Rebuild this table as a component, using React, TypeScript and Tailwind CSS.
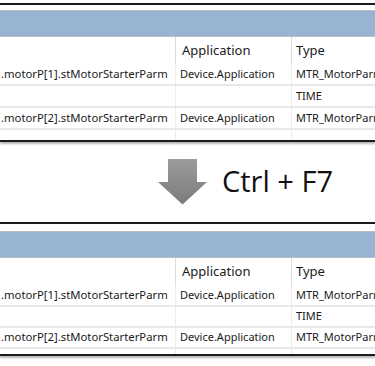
import React from "react";

const font = { fontFamily: "Tahoma, 'Noto Sans', 'DejaVu Sans', sans-serif" };

type Row = { name: string; app: string; type: string };

const rows: Row[] = [
  { name: ".motorP[1].stMotorStarterParm", app: "Device.Application", type: "MTR_MotorParm" },
  { name: "", app: "", type: "TIME" },
  { name: ".motorP[2].stMotorStarterParm", app: "Device.Application", type: "MTR_MotorParm" },
];

function Panel({ gapTop, headerH, rowH, tailH }: { gapTop: string; headerH: string; rowH: string; tailH: string }) {
  return (
    <div
      className="w-full overflow-hidden border-t-2 border-b-2 border-[#1b1b1b] bg-white shadow-[0_2px_2px_rgba(0,0,0,0.3)]"
      style={font}
    >
      <div className={gapTop} />
      <div className="h-[27px] border-y border-[#b9bfc6] bg-[#98b4d3]" />
      <div className={`flex ${headerH} text-[13px] text-[#1a1a1a]`}>
        <div className="w-[176px] shrink-0 border-r border-[#dcdcdc]" />
        <div className="flex w-[116px] shrink-0 items-center border-r border-[#dcdcdc] pl-[6px]">Application</div>
        <div className="flex flex-1 items-center pl-[4px]">Type</div>
      </div>
      {rows.map((r, i) => (
        <div key={i} className={`flex ${rowH} border-b-2 border-[#e8e8e8] text-[11.3px] text-[#1a1a1a]`}>
          <div className="flex w-[176px] shrink-0 items-center overflow-hidden whitespace-nowrap border-r border-[#ececec] pl-[1px]">
            {r.name}
          </div>
          <div className="flex w-[116px] shrink-0 items-center whitespace-nowrap border-r border-[#ececec] pl-[4px] text-[11px]">
            {r.app}
          </div>
          <div className="flex min-w-0 flex-1 items-center overflow-hidden whitespace-nowrap pl-[4px] text-[11px]">
            {r.type}
          </div>
        </div>
      ))}
      <div className={`flex ${tailH}`}>
        <div className="w-[176px] shrink-0 border-r border-[#ececec]" />
        <div className="w-[116px] shrink-0 border-r border-[#ececec]" />
      </div>
    </div>
  );
}

function DownArrow() {
  return (
    <svg width="50" height="46" viewBox="0 0 50 46">
      <defs>
        <linearGradient id="ag" x1="0" y1="0" x2="0" y2="1">
          <stop offset="0" stopColor="#9c9c9c" />
          <stop offset="1" stopColor="#7b7b7b" />
        </linearGradient>
      </defs>
      <path d="M10 0 H39 V23 H49 L24.5 45.5 L0 23 H10 Z" fill="url(#ag)" />
    </svg>
  );
}

export default function App() {
  return (
    <div className="h-[366px] w-[375px] overflow-hidden bg-white">
      <div className="h-[3px]" />
      <Panel gapTop="h-[5px]" headerH="h-[27px]" rowH="h-[22px]" tailH="h-[10px]" />
      <div className="flex h-[80px] items-start gap-[14px] pl-[158px] pt-[17px]">
        <DownArrow />
        <span
          className="mt-[2px] text-[29px] leading-[40px] text-[#111]"
          style={{ fontFamily: "'Open Sans', 'Noto Sans', sans-serif" }}
        >
          Ctrl + F7
        </span>
      </div>
      <Panel gapTop="h-[7px]" headerH="h-[28px]" rowH="h-[21px]" tailH="h-[5px]" />
    </div>
  );
}
